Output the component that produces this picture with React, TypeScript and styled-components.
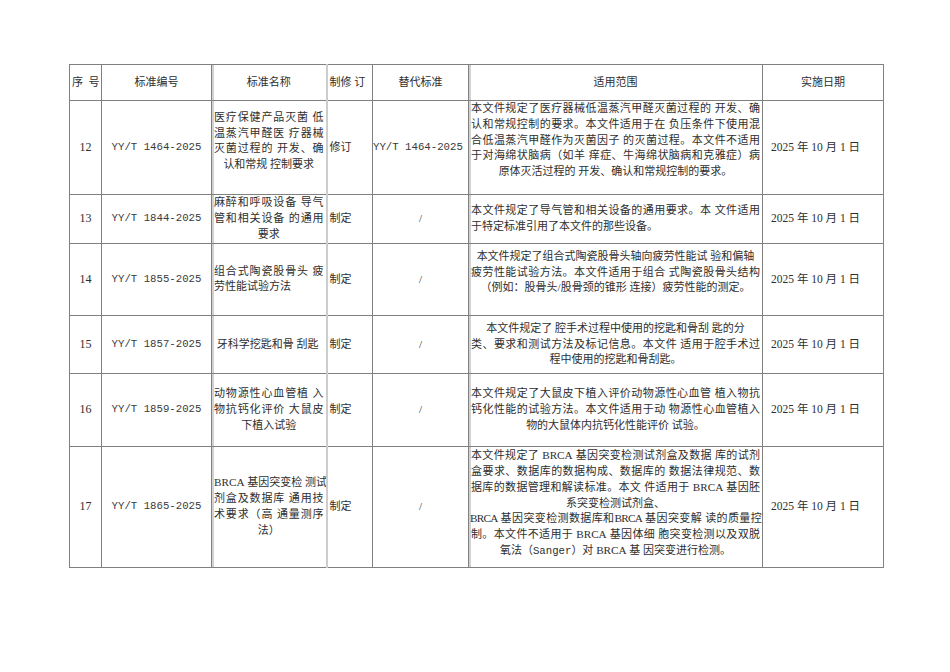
import React from 'react'
import styled, { createGlobalStyle } from 'styled-components'

type Align = 'justify' | 'center' | 'left'

interface Line {
  t: string
  a: Align
  tight?: boolean
}

interface Row {
  no: string
  code: string
  name: Line[]
  kind: string
  replace: string
  scope: Line[]
  date: string
  height: number
  lift?: number
}

const j = (t: string): Line => ({ t, a: 'justify' })
const c = (t: string): Line => ({ t, a: 'center' })
const l = (t: string): Line => ({ t, a: 'left' })
const squeeze = (t: string): Line => ({ t, a: 'justify', tight: true })

const rows: Row[] = [
  {
    no: '12',
    code: 'YY/T 1464-2025',
    name: [j('医疗保健产品灭菌 低'), j('温蒸汽甲醛医 疗器械'), j('灭菌过程的 开发、确'), c('认和常规 控制要求')],
    kind: '修订',
    replace: 'YY/T 1464-2025',
    scope: [
      j('本文件规定了医疗器械低温蒸汽甲醛灭菌过程的 开发、确'),
      j('认和常规控制的要求。本文件适用于在 负压条件下使用混'),
      j('合低温蒸汽甲醛作为灭菌因子 的灭菌过程。本文件不适用'),
      j('于对海绵状脑病（如羊 痒症、牛海绵状脑病和克雅症）病'),
      c('原体灭活过程的 开发、确认和常规控制的要求。'),
    ],
    date: '2025 年 10 月 1 日',
    height: 92,
    lift: 14,
  },
  {
    no: '13',
    code: 'YY/T 1844-2025',
    name: [j('麻醉和呼吸设备 导气'), j('管和相关设备 的通用'), c('要求')],
    kind: '制定',
    replace: '/',
    scope: [j('本文件规定了导气管和相关设备的通用要求。本 文件适用'), l('于特定标准引用了本文件的那些设备。')],
    date: '2025 年 10 月 1 日',
    height: 49,
  },
  {
    no: '14',
    code: 'YY/T 1855-2025',
    name: [j('组合式陶瓷股骨头 疲'), l('劳性能试验方法')],
    kind: '制定',
    replace: '/',
    scope: [
      c('本文件规定了组合式陶瓷股骨头轴向疲劳性能试 验和偏轴'),
      j('疲劳性能试验方法。本文件适用于组合 式陶瓷股骨头结构'),
      c('（例如：股骨头/股骨颈的锥形 连接）疲劳性能的测定。'),
    ],
    date: '2025 年 10 月 1 日',
    height: 72,
    lift: 14,
  },
  {
    no: '15',
    code: 'YY/T 1857-2025',
    name: [l('\u00a0牙科学挖匙和骨 刮匙')],
    kind: '制定',
    replace: '/',
    scope: [
      c('本文件规定了 腔手术过程中使用的挖匙和骨刮 匙的分'),
      j('类、要求和测试方法及标记信息。本文件 适用于腔手术过'),
      c('程中使用的挖匙和骨刮匙。'),
    ],
    date: '2025 年 10 月 1 日',
    height: 58,
  },
  {
    no: '16',
    code: 'YY/T 1859-2025',
    name: [j('动物源性心血管植 入'), j('物抗钙化评价 大鼠皮'), c('下植入试验')],
    kind: '制定',
    replace: '/',
    scope: [
      j('本文件规定了大鼠皮下植入评价动物源性心血管 植入物抗'),
      j('钙化性能的试验方法。本文件适用于动 物源性心血管植入'),
      c('物的大鼠体内抗钙化性能评价 试验。'),
    ],
    date: '2025 年 10 月 1 日',
    height: 73,
  },
  {
    no: '17',
    code: 'YY/T 1865-2025',
    name: [j('BRCA 基因突变检 测试'), j('剂盒及数据库 通用技'), j('术要求（高 通量测序'), c('法）')],
    kind: '制定',
    replace: '/',
    scope: [
      j('本文件规定了 BRCA 基因突变检测试剂盒及数据 库的试剂'),
      j('盒要求、数据库的数据构成、数据库的 数据法律规范、数'),
      j('据库的数据管理和解读标准。本文 件适用于 BRCA 基因胚'),
      c('系突变检测试剂盒、'),
      squeeze('BRCA 基因突变检测数据库和BRCA 基因突变解 读的质量控'),
      j('制。本文件不适用于 BRCA 基因体细 胞突变检测以及双脱'),
      c('氧法（Sanger）对 BRCA 基 因突变进行检测。'),
    ],
    date: '2025 年 10 月 1 日',
    height: 121,
    lift: 6,
  },
]

const GlobalStyle = createGlobalStyle`
  html, body {
    margin: 0;
    padding: 0;
    background: #ffffff;
  }
  body {
    font-family: "Liberation Serif", "Noto Sans CJK SC", serif;
    color: #2e2e2e;
  }
`

const Page = styled.div`
  width: 950px;
  height: 672px;
  padding: 64px 0 0 69px;
  box-sizing: border-box;
`

const Table = styled.table`
  border-collapse: collapse;
  table-layout: fixed;
  width: 814px;
  font-size: 11px;
  line-height: 15.8px;
`

const Cell = styled.td<{ $edge?: 'dark' | 'light' | 'double'; $align?: Align; $lift?: number }>`
  border: 1px solid #808080;
  padding: 0 2px ${(p) => p.$lift ?? 0}px;
  vertical-align: middle;
  text-align: ${(p) => (p.$align === 'left' ? 'left' : 'center')};
  white-space: nowrap;
  overflow: hidden;
  ${(p) => p.$edge === 'light' && 'border-left: 2px solid #cdcdcd;'}
  ${(p) => p.$edge === 'double' && 'box-shadow: inset 2px 0 0 #d2d2d2;'}
`

const Head = styled(Cell).attrs({ as: 'th' })`
  font-weight: normal;
`

const NumCell = styled(Cell)`
  font-size: 12px;
`

const CodeCell = styled(Cell)<{ $flush?: boolean }>`
  font-family: "Liberation Mono", "Noto Sans CJK SC", monospace;
  font-size: 10.7px;
  color: #3a3a3a;
  padding-left: ${(p) => (p.$flush ? 0 : 2)}px;
`

const DateCell = styled(Cell)`
  text-align: left;
  padding-left: 8px;
  font-size: 11.5px;
`

const TextLine = styled.div<{ $a: Align; $tight?: boolean }>`
  text-align: ${(p) => (p.$a === 'justify' ? 'justify' : p.$a)};
  text-align-last: ${(p) => (p.$a === 'justify' ? 'justify' : p.$a)};
  letter-spacing: ${(p) => (p.$tight ? '-0.75px' : 'normal')};
  margin: ${(p) => (p.$tight ? '0 -1px' : '0')};
  white-space: nowrap;
`

const Latin = styled.span`
  font-size: 11.2px;
`

const Mono = styled.span`
  font-family: "Liberation Mono", monospace;
  font-size: 10.7px;
`

function renderText(t: string) {
  const parts = t.split(/(Sanger|BRCA)/)
  if (parts.length === 1) return t
  return parts.map((p, i) =>
    p === 'Sanger' ? <Mono key={i}>{p}</Mono> : p === 'BRCA' ? <Latin key={i}>{p}</Latin> : p
  )
}

function Lines({ lines }: { lines: Line[] }) {
  return (
    <>
      {lines.map((ln, i) => (
        <TextLine key={i} $a={ln.a} $tight={ln.tight}>
          {renderText(ln.t)}
        </TextLine>
      ))}
    </>
  )
}

export default function App() {
  return (
    <Page>
      <GlobalStyle />
      <Table>
        <colgroup>
          <col style={{ width: 32 }} />
          <col style={{ width: 110 }} />
          <col style={{ width: 115 }} />
          <col style={{ width: 46 }} />
          <col style={{ width: 96 }} />
          <col style={{ width: 294 }} />
          <col style={{ width: 121 }} />
        </colgroup>
        <thead>
          <tr style={{ height: 36 }}>
            <Head>序&nbsp;&nbsp;号</Head>
            <Head>标准编号</Head>
            <Head $edge="double">标准名称</Head>
            <Head $edge="light" $align="left">制修&nbsp;订</Head>
            <Head>替代标准</Head>
            <Head $edge="double">适用范围</Head>
            <Head>实施日期</Head>
          </tr>
        </thead>
        <tbody>
          {rows.map((r) => (
            <tr key={r.no} style={{ height: r.height }}>
              <NumCell>{r.no}</NumCell>
              <CodeCell>{r.code}</CodeCell>
              <Cell $edge="double" $lift={r.no === '12' ? 12 : 0}>
                <Lines lines={r.name} />
              </Cell>
              <Cell $edge="light" $align="left">
                {r.kind}
              </Cell>
              {r.replace !== '/' ? (
                <CodeCell $flush $align="left">
                  {r.replace}
                </CodeCell>
              ) : (
                <Cell>{r.replace}</Cell>
              )}
              <Cell $edge="double" $lift={r.lift}>
                <Lines lines={r.scope} />
              </Cell>
              <DateCell>{r.date}</DateCell>
            </tr>
          ))}
        </tbody>
      </Table>
    </Page>
  )
}
